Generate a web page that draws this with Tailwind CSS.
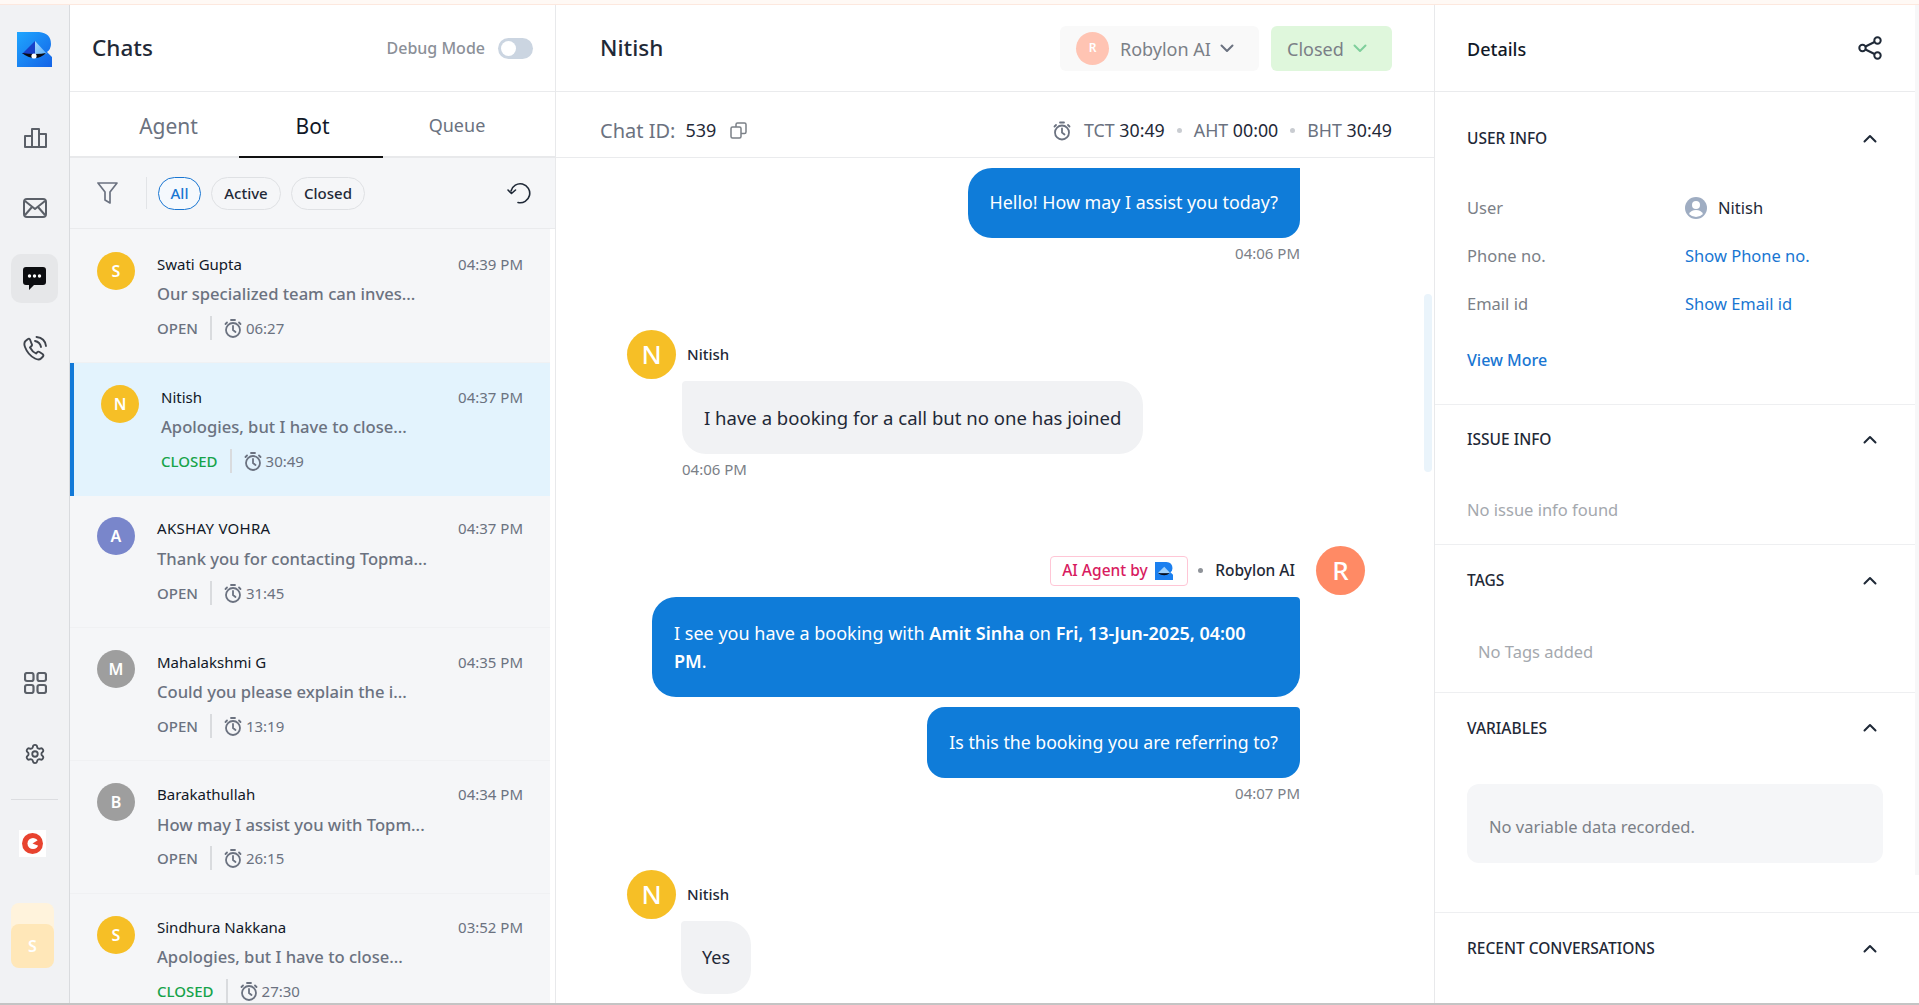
<!DOCTYPE html>
<html lang="en">
<head>
<meta charset="utf-8">
<title>Chats</title>
<script src="https://cdn.jsdelivr.net/npm/@tailwindcss/browser@4"></script>
</head>
<body class="h-[1005px] w-[1919px] overflow-hidden bg-white font-['Noto_Sans',sans-serif] text-[#111827]">
<div class="h-[5px] bg-[#fff9f5] border-b border-[#fde8de]"></div>
<div class="flex h-[998px] overflow-hidden">

  <!-- icon rail -->
  <aside class="w-[70px] shrink-0 bg-[#f1f2f4] border-r border-[#d9dbde] flex flex-col items-start">
    <svg class="ml-[17px] mt-[27px]" width="35" height="35" viewBox="0 0 35 35">
      <defs>
        <linearGradient id="lg" x1="0" y1="0" x2="1" y2="1"><stop offset="0" stop-color="#1fa6ff"/><stop offset="1" stop-color="#1463e6"/></linearGradient>
        <linearGradient id="lg2" x1="0" y1="0" x2="1" y2="1"><stop offset="0" stop-color="#a8d8ff"/><stop offset="1" stop-color="#5cb0fa"/></linearGradient>
      </defs>
      <path d="M0 0H22Q34 1 34 12Q34 17 30 20L35 25V35H0Z" fill="url(#lg)"/>
      <path d="M18 9L5 22H18Z" fill="#1740c8"/>
      <path d="M18 9L30 22H18Z" fill="url(#lg2)"/>
      <path d="M5 21Q11 22 18 22Q25 22 29 21Q24 26 18 26Q11 26 5 21Z" fill="#0b0b12"/>
      <circle cx="17" cy="24" r="2.6" fill="#fff"/>
    </svg>
    <svg class="ml-[24px] mt-[61px]" width="23" height="20" viewBox="0 0 23 20" fill="none" stroke="#5b6068" stroke-width="2" stroke-linejoin="round"><path d="M1 19V8H8V19ZM8 19V1H15V19ZM15 19V6H22V19Z"/></svg>
    <svg class="ml-[23px] mt-[50px]" width="24" height="20" viewBox="0 0 24 20" fill="none" stroke="#5b6068" stroke-width="2" stroke-linejoin="round"><rect x="1" y="1" width="22" height="18" rx="3"/><path d="M2 3L12 11L22 3M2 17L9 9M22 17L15 9"/></svg>
    <div class="ml-[11px] mt-[36px] w-[47px] h-[49px] rounded-[10px] bg-[#e6e7e9] flex items-center justify-center">
      <svg width="23" height="23" viewBox="0 0 23 23"><path d="M3 0H20Q23 0 23 3V15Q23 18 20 18H11L6 23V18H3Q0 18 0 15V3Q0 0 3 0Z" fill="#0c0d10"/><circle cx="6.5" cy="9" r="1.7" fill="#fff"/><circle cx="11.5" cy="9" r="1.7" fill="#fff"/><circle cx="16.5" cy="9" r="1.7" fill="#fff"/></svg>
    </div>
    <svg class="ml-[23px] mt-[33px]" width="24" height="25" viewBox="0 0 24 25" fill="none" stroke="#3f444c" stroke-width="1.9" stroke-linecap="round" stroke-linejoin="round"><path d="M5 3L2.500 5Q0.500 7 2 11Q5 19 12 22.500Q16 24.500 18 22.500L20 20.500Q21 19 19.500 18L16.500 16Q15 15 14 16.500L13 17.500Q9.500 16 7 11.500L8.500 10Q9.500 9 8.500 7.500L7 3.500Q6 2 5 3Z"/><path d="M12 5Q17 6 18 11M13.500 1Q22 2 23 10"/></svg>
    <svg class="ml-[24px] mt-[311px]" width="23" height="22" viewBox="0 0 23 22" fill="none" stroke="#5b6068" stroke-width="2.200"><rect x="1" y="1" width="8.500" height="8" rx="2"/><rect x="13.500" y="1" width="8.500" height="8" rx="2"/><rect x="1" y="13" width="8.500" height="8" rx="2"/><rect x="13.500" y="13" width="8.500" height="8" rx="2"/></svg>
    <svg class="ml-[24px] mt-[48px]" width="22" height="24" viewBox="0 0 24 24" fill="none" stroke="#4b5058" stroke-width="2" stroke-linecap="round" stroke-linejoin="round"><path d="M9.671 4.136a2.34 2.34 0 0 1 4.659 0 2.34 2.34 0 0 0 3.319 1.915 2.34 2.34 0 0 1 2.33 4.033 2.34 2.34 0 0 0 0 3.831 2.34 2.34 0 0 1-2.33 4.033 2.34 2.34 0 0 0-3.319 1.915 2.34 2.34 0 0 1-4.659 0 2.34 2.34 0 0 0-3.32-1.915 2.34 2.34 0 0 1-2.33-4.033 2.34 2.34 0 0 0 0-3.831A2.34 2.34 0 0 1 6.35 6.051a2.34 2.34 0 0 0 3.319-1.915"/><circle cx="12" cy="12" r="3"/></svg>
    <div class="ml-[11px] mt-[33px] w-[47px] h-px bg-[#dcdde0]"></div>
    <div class="ml-[19px] mt-[30px] w-[27px] h-[27px] bg-white flex items-center justify-center">
      <svg width="21" height="21" viewBox="0 0 21 21"><circle cx="10.500" cy="10.500" r="10.500" fill="#e8432f"/><circle cx="11" cy="10.500" r="5.500" fill="#fff"/><path d="M17 6.500L10.500 10.500L17 13Z" fill="#e8432f"/></svg>
    </div>
    <div class="ml-[11px] mt-[46px] w-[43px] h-[65px] relative">
      <div class="h-[40px] rounded-[8px] bg-[#fff3dc]"></div>
      <div class="absolute left-0 top-[21px] w-[43px] h-[44px] rounded-[8px] bg-[#ffe7b8] flex items-center justify-center text-white text-[16px] font-semibold">S</div>
    </div>
  </aside>

  <!-- chat list -->
  <section class="w-[486px] shrink-0 border-r border-[#e8e9eb] flex flex-col">
    <header class="h-[87px] shrink-0 border-b border-[#eaebed] flex items-center pl-[22px] pr-[22px]">
      <h1 class="text-[22.5px] font-medium text-[#1f2937] flex-1">Chats</h1>
      <span class="text-[16px] font-medium text-[#8b9098] mr-[13px]">Debug Mode</span>
      <span class="w-[35px] h-[21px] rounded-full bg-[#cbd5e1] relative">
        <span class="absolute left-[3px] top-[3px] w-[15px] h-[15px] rounded-full bg-white"></span>
      </span>
    </header>
    <div class="h-[66px] shrink-0 border-b-2 border-[#e8e9eb] flex text-[21px]">
      <div class="w-[169px] pt-[5px] flex items-center justify-center pl-[28px] text-[#6b7280]">Agent</div>
      <div class="w-[144px] -mb-[2px] pt-[5px] pl-[3px] border-b-2 border-[#111] flex items-center justify-center text-[#111827]">Bot</div>
      <div class="w-[143px] flex items-center justify-center text-[18px] pl-[5px] pt-[3px] text-[#6b7280]">Queue</div>
    </div>
    <div class="h-[71px] shrink-0 bg-[#f5f6f8] border-b border-[#eaebed] flex items-center pl-[27px] pr-[24px] text-[15px] font-medium">
      <svg width="21" height="22" viewBox="0 0 21 22" fill="none" stroke="#6b7280" stroke-width="1.700" stroke-linejoin="round"><path d="M1 1H20L13 10V21L8 18V10Z"/></svg>
      <span class="w-px h-[32px] bg-[#e2e4e7] ml-[28px] mr-[11px]"></span>
      <span class="h-[33px] w-[43px] rounded-full border border-[#1976d2] flex items-center justify-center text-[#1976d2] bg-[#f5f9fd]">All</span>
      <span class="h-[33px] w-[70px] ml-[10px] rounded-full border border-[#dfe1e4] flex items-center justify-center text-[#1f2937]">Active</span>
      <span class="h-[33px] w-[74px] ml-[10px] rounded-full border border-[#dfe1e4] flex items-center justify-center text-[#1f2937]">Closed</span>
      <svg class="ml-auto" width="24" height="22" viewBox="0 0 24 22" fill="none" stroke="#1f2937" stroke-width="1.600" stroke-linecap="round" stroke-linejoin="round"><path d="M4 9A9.500 9.500 0 1 1 11 20.500"/><path d="M1 8L4.500 11.500L8.500 8"/></svg>
    </div>

    <div class="flex-1 flex flex-col overflow-hidden w-[480px]">
      <div class="h-[134px] shrink-0 bg-[#f5f6f8] border-b border-[#f0f1f3] flex pl-[27px] pr-[27px]">
        <div class="w-[38px] h-[38px] mt-[23px] rounded-full bg-[#f6bf26] text-white font-semibold text-[16px] flex items-center justify-center shrink-0">S</div>
        <div class="ml-[22px] flex-1 pt-[25px]">
          <div class="flex justify-between h-[20px] items-center text-[15px]"><span class="text-[#111827]">Swati Gupta</span><span class="text-[#6b7280]">04:39 PM</span></div>
          <div class="mt-[8px] h-[24px] leading-[24px] text-[16.6px] font-medium text-[#6b7280]">Our specialized team can inves...</div>
          <div class="mt-[10px] h-[24px] flex items-center text-[15px] text-[#6b7280]"><span class="font-medium">OPEN</span><span class="w-[2px] h-[24px] bg-[#d9dbde] mx-[12px]"></span><svg class="shrink-0" width="18" height="19" viewBox="0 0 18 19" fill="none" stroke="#6b7280" stroke-width="1.800" stroke-linecap="round"><circle cx="9" cy="11" r="7"/><path d="M9 7V11L11.500 13M3 3.500L1.500 5M15 3.500L16.500 5M7 1H11"/></svg><span class="ml-[4px]">06:27</span></div>
        </div>
      </div>
      <div class="h-[133px] shrink-0 bg-[#e3f3fd] border-l-4 border-[#1279d8] flex pl-[27px] pr-[27px]">
        <div class="w-[38px] h-[38px] mt-[22px] rounded-full bg-[#f6bf26] text-white font-semibold text-[16px] flex items-center justify-center shrink-0">N</div>
        <div class="ml-[22px] flex-1 pt-[24px]">
          <div class="flex justify-between h-[20px] items-center text-[15px]"><span class="text-[#111827]">Nitish</span><span class="text-[#6b7280]">04:37 PM</span></div>
          <div class="mt-[8px] h-[24px] leading-[24px] text-[16.6px] font-medium text-[#6b7280]">Apologies, but I have to close...</div>
          <div class="mt-[10px] h-[24px] flex items-center text-[15px] text-[#6b7280]"><span class="font-medium text-[#16a34a]">CLOSED</span><span class="w-[2px] h-[24px] bg-[#d9dbde] mx-[12px]"></span><svg class="shrink-0" width="18" height="19" viewBox="0 0 18 19" fill="none" stroke="#6b7280" stroke-width="1.800" stroke-linecap="round"><circle cx="9" cy="11" r="7"/><path d="M9 7V11L11.500 13M3 3.500L1.500 5M15 3.500L16.500 5M7 1H11"/></svg><span class="ml-[4px]">30:49</span></div>
        </div>
      </div>
      <div class="h-[132px] shrink-0 bg-[#f5f6f8] border-b border-[#f0f1f3] flex pl-[27px] pr-[27px]">
        <div class="w-[38px] h-[38px] mt-[21px] rounded-full bg-[#7986cb] text-white font-semibold text-[16px] flex items-center justify-center shrink-0">A</div>
        <div class="ml-[22px] flex-1 pt-[22px]">
          <div class="flex justify-between h-[20px] items-center text-[15px]"><span class="text-[#111827] tracking-[0.3px]">AKSHAY VOHRA</span><span class="text-[#6b7280]">04:37 PM</span></div>
          <div class="mt-[9px] h-[24px] leading-[24px] text-[16.6px] font-medium text-[#6b7280]">Thank you for contacting Topma...</div>
          <div class="mt-[10px] h-[24px] flex items-center text-[15px] text-[#6b7280]"><span class="font-medium">OPEN</span><span class="w-[2px] h-[24px] bg-[#d9dbde] mx-[12px]"></span><svg class="shrink-0" width="18" height="19" viewBox="0 0 18 19" fill="none" stroke="#6b7280" stroke-width="1.800" stroke-linecap="round"><circle cx="9" cy="11" r="7"/><path d="M9 7V11L11.500 13M3 3.500L1.500 5M15 3.500L16.500 5M7 1H11"/></svg><span class="ml-[4px]">31:45</span></div>
        </div>
      </div>
      <div class="h-[133px] shrink-0 bg-[#f5f6f8] border-b border-[#f0f1f3] flex pl-[27px] pr-[27px]">
        <div class="w-[38px] h-[38px] mt-[22px] rounded-full bg-[#9e9e9e] text-white font-semibold text-[16px] flex items-center justify-center shrink-0">M</div>
        <div class="ml-[22px] flex-1 pt-[24px]">
          <div class="flex justify-between h-[20px] items-center text-[15px]"><span class="text-[#111827]">Mahalakshmi G</span><span class="text-[#6b7280]">04:35 PM</span></div>
          <div class="mt-[8px] h-[24px] leading-[24px] text-[16.6px] font-medium text-[#6b7280]">Could you please explain the i...</div>
          <div class="mt-[10px] h-[24px] flex items-center text-[15px] text-[#6b7280]"><span class="font-medium">OPEN</span><span class="w-[2px] h-[24px] bg-[#d9dbde] mx-[12px]"></span><svg class="shrink-0" width="18" height="19" viewBox="0 0 18 19" fill="none" stroke="#6b7280" stroke-width="1.800" stroke-linecap="round"><circle cx="9" cy="11" r="7"/><path d="M9 7V11L11.500 13M3 3.500L1.500 5M15 3.500L16.500 5M7 1H11"/></svg><span class="ml-[4px]">13:19</span></div>
        </div>
      </div>
      <div class="h-[133px] shrink-0 bg-[#f5f6f8] border-b border-[#f0f1f3] flex pl-[27px] pr-[27px]">
        <div class="w-[38px] h-[38px] mt-[22px] rounded-full bg-[#9e9e9e] text-white font-semibold text-[16px] flex items-center justify-center shrink-0">B</div>
        <div class="ml-[22px] flex-1 pt-[23px]">
          <div class="flex justify-between h-[20px] items-center text-[15px]"><span class="text-[#111827]">Barakathullah</span><span class="text-[#6b7280]">04:34 PM</span></div>
          <div class="mt-[9px] h-[24px] leading-[24px] text-[16.6px] font-medium text-[#6b7280]">How may I assist you with Topm...</div>
          <div class="mt-[9px] h-[24px] flex items-center text-[15px] text-[#6b7280]"><span class="font-medium">OPEN</span><span class="w-[2px] h-[24px] bg-[#d9dbde] mx-[12px]"></span><svg class="shrink-0" width="18" height="19" viewBox="0 0 18 19" fill="none" stroke="#6b7280" stroke-width="1.800" stroke-linecap="round"><circle cx="9" cy="11" r="7"/><path d="M9 7V11L11.500 13M3 3.500L1.500 5M15 3.500L16.500 5M7 1H11"/></svg><span class="ml-[4px]">26:15</span></div>
        </div>
      </div>
      <div class="flex-1 bg-[#f5f6f8] flex pl-[27px] pr-[27px]">
        <div class="w-[38px] h-[38px] mt-[22px] rounded-full bg-[#f6bf26] text-white font-semibold text-[16px] flex items-center justify-center shrink-0">S</div>
        <div class="ml-[22px] flex-1 pt-[23px]">
          <div class="flex justify-between h-[20px] items-center text-[15px]"><span class="text-[#111827]">Sindhura Nakkana</span><span class="text-[#6b7280]">03:52 PM</span></div>
          <div class="mt-[8px] h-[24px] leading-[24px] text-[16.6px] font-medium text-[#6b7280]">Apologies, but I have to close...</div>
          <div class="mt-[10px] h-[24px] flex items-center text-[15px] text-[#6b7280]"><span class="font-medium text-[#16a34a]">CLOSED</span><span class="w-[2px] h-[24px] bg-[#d9dbde] mx-[12px]"></span><svg class="shrink-0" width="18" height="19" viewBox="0 0 18 19" fill="none" stroke="#6b7280" stroke-width="1.800" stroke-linecap="round"><circle cx="9" cy="11" r="7"/><path d="M9 7V11L11.500 13M3 3.500L1.500 5M15 3.500L16.500 5M7 1H11"/></svg><span class="ml-[4px]">27:30</span></div>
        </div>
      </div>
    </div>
  </section>

  <!-- conversation -->
  <main class="w-[879px] shrink-0 border-r border-[#e8e9eb] flex flex-col relative">
    <header class="h-[87px] shrink-0 border-b border-[#eaebed] flex items-center pl-[44px] pr-[42px]">
      <h2 class="text-[22.5px] font-medium text-[#1f2937] flex-1">Nitish</h2>
      <div class="w-[199px] h-[45px] rounded-[6px] bg-[#f9f9f9] flex items-center pl-[16px] text-[18px] text-[#7b8087]">
        <span class="w-[33px] h-[33px] rounded-full bg-[#ffc4b3] text-white text-[12px] font-semibold flex items-center justify-center">R</span>
        <span class="ml-[11px] pt-[2px]">Robylon AI</span>
        <svg class="ml-[9px]" width="14" height="9" viewBox="0 0 14 9" fill="none" stroke="#6b7280" stroke-width="2" stroke-linecap="round" stroke-linejoin="round"><path d="M1.500 1.500L7 7L12.500 1.500"/></svg>
      </div>
      <div class="ml-[12px] w-[121px] h-[45px] rounded-[6px] bg-[#dff7dc] flex items-center pl-[16px] text-[18px] text-[#7b8087]">
        <span class="pt-[2px]">Closed</span>
        <svg class="ml-[9px]" width="14" height="9" viewBox="0 0 14 9" fill="none" stroke="#7fcf9b" stroke-width="2" stroke-linecap="round" stroke-linejoin="round"><path d="M1.500 1.500L7 7L12.500 1.500"/></svg>
      </div>
    </header>
    <div class="h-[66px] shrink-0 border-b border-[#eaebed] flex items-center pt-[12px] pl-[44px] pr-[42px] text-[#6b7280]">
      <span class="text-[20px]">Chat ID:</span>
      <span class="ml-[10px] text-[18px] text-[#1f2937]">539</span>
      <svg class="ml-[14px]" width="17" height="17" viewBox="0 0 17 17" fill="none" stroke="#7b8087" stroke-width="1.500"><rect x="1" y="5" width="10" height="11" rx="1.500"/><path d="M6 5V2.500Q6 1 7.500 1H14.500Q16 1 16 2.500V10Q16 11.500 14.500 11.500H11"/></svg>
      <svg class="ml-auto" width="18" height="20" viewBox="0 0 18 19" fill="none" stroke="#6b7280" stroke-width="1.800" stroke-linecap="round"><circle cx="9" cy="11" r="7"/><path d="M9 7V11L11.500 13M3 3.500L1.500 5M15 3.500L16.500 5M7 1H11"/></svg>
      <span class="ml-[13px] text-[17.8px]">TCT <span class="text-[#1f2937]">30:49</span></span>
      <span class="mx-[12px] w-[5px] h-[5px] rounded-full bg-[#c9ccd1]"></span>
      <span class="text-[17.8px]">AHT <span class="text-[#1f2937]">00:00</span></span>
      <span class="mx-[12px] w-[5px] h-[5px] rounded-full bg-[#c9ccd1]"></span>
      <span class="text-[17.8px]">BHT <span class="text-[#1f2937]">30:49</span></span>
    </div>

    <div class="flex-1 overflow-hidden relative text-[18px]">
      <div class="absolute left-[868px] top-[136px] w-[8px] h-[178px] rounded-full bg-[#eaf4fb]"></div>
      <div class="pt-[10px] pl-[71px] w-[744px] flex flex-col">
        <div class="self-end h-[70px] rounded-l-[24px] rounded-br-[18px] bg-[#0f7cd9] text-white text-[17.85px] flex items-center pb-[2px] px-[22px]">Hello! How may I assist you today?</div>
        <div class="self-end mt-[5px] h-[20px] leading-[20px] text-[15px] text-[#7b8087]">04:06 PM</div>

        <div class="mt-[67px] flex items-center h-[49px]">
          <span class="w-[49px] h-[49px] rounded-full bg-[#f6bf26] text-white text-[26px] font-medium flex items-center justify-center">N</span>
          <span class="ml-[11px] text-[15px] font-medium text-[#1f2937]">Nitish</span>
        </div>
        <div class="ml-[55px] mt-[2px] self-start h-[73px] rounded-[24px] bg-[#f1f2f4] text-[#1f2937] text-[18.55px] flex items-center px-[22px] rounded-tl-[4px]">I have a booking for a call but no one has joined</div>
        <div class="ml-[55px] mt-[5px] h-[20px] leading-[20px] text-[15px] text-[#7b8087]">04:06 PM</div>

        <div class="mt-[67px] -mr-[65px] flex items-center justify-end h-[49px]">
          <span class="h-[30px] w-[138px] rounded-[4px] border border-[#ffc6d6] flex items-center pl-[11px] text-[15.5px] font-medium text-[#d81b60]">AI Agent by
            <svg class="ml-[7px]" width="18" height="18" viewBox="0 0 35 35"><path d="M0 0H22Q34 1 34 12Q34 17 30 20L35 25V35H0Z" fill="#1b7fef"/><path d="M18 9L5 22H30Z" fill="#9fd0fb"/><path d="M5 21Q11 22 18 22Q25 22 29 21Q24 26 18 26Q11 26 5 21Z" fill="#0b0b12"/></svg>
          </span>
          <span class="ml-[10px] w-[5px] h-[5px] rounded-full bg-[#8f9399]"></span>
          <span class="ml-[12px] text-[15.5px] font-medium text-[#1f2937]">Robylon AI</span>
          <span class="ml-[21px] w-[49px] h-[49px] rounded-full bg-[#ff8a65] text-white text-[26px] font-medium flex items-center justify-center">R</span>
        </div>
        <div class="self-end mt-[2px] w-[648px] h-[100px] rounded-[24px] rounded-tr-[4px] bg-[#0f7cd9] text-white px-[22px] pt-[22px] leading-[28px]">I see you have a booking with <b class="font-semibold">Amit Sinha</b> on <b class="font-semibold">Fri, 13-Jun-2025, 04:00 PM</b>.</div>
        <div class="self-end mt-[10px] h-[71px] rounded-[18px] rounded-tr-[4px] bg-[#0f7cd9] text-white text-[17.7px] flex items-center px-[22px]">Is this the booking you are referring to?</div>
        <div class="self-end mt-[5px] h-[20px] leading-[20px] text-[15px] text-[#7b8087]">04:07 PM</div>

        <div class="mt-[67px] flex items-center h-[49px]">
          <span class="w-[49px] h-[49px] rounded-full bg-[#f6bf26] text-white text-[26px] font-medium flex items-center justify-center">N</span>
          <span class="ml-[11px] text-[15px] font-medium text-[#1f2937]">Nitish</span>
        </div>
        <div class="ml-[54px] mt-[2px] self-start h-[73px] rounded-[24px] rounded-tl-[4px] bg-[#f1f2f4] text-[#1f2937] flex items-center px-[21px]">Yes</div>
      </div>
    </div>
  </main>

  <!-- details -->
  <aside class="flex-1 flex flex-col relative">
    <div class="absolute right-0 top-0 w-[4px] h-[870px] bg-[#f7f7f8]"></div>
    <header class="h-[87px] shrink-0 border-b border-[#eaebed] flex items-center justify-between pl-[32px] pr-[37px] text-[18px] font-medium text-[#111827]">
      <span class="pt-[2px]">Details</span>
      <svg width="24" height="24" viewBox="0 0 24 24" fill="none" stroke="#1f2937" stroke-width="2"><circle cx="19.500" cy="4.500" r="3.200"/><circle cx="4.500" cy="12" r="3.200"/><circle cx="19.500" cy="19.500" r="3.200"/><path d="M7.500 10.500L16.500 6M7.500 13.500L16.500 18"/></svg>
    </header>

    <section class="h-[313px] shrink-0 border-b border-[#eeeff1] pl-[32px] pr-[42px]">
      <div class="h-[20px] mt-[36px] flex items-center justify-between text-[15.5px] font-medium text-[#1f2937]"><span class="pt-[2px]">USER INFO</span><svg width="14" height="9" viewBox="0 0 14 9" fill="none" stroke="#1f2937" stroke-width="2" stroke-linecap="round" stroke-linejoin="round"><path d="M1.500 7.500L7 2L12.500 7.500"/></svg></div>
      <div class="mt-[48px] h-[24px] flex items-center text-[16.5px]"><span class="w-[218px] text-[#7b8087]">User</span><svg width="22" height="22" viewBox="0 0 22 22"><circle cx="11" cy="11" r="11" fill="#9fadc2"/><circle cx="11" cy="8" r="4" fill="#fff"/><path d="M4 17Q6 13 11 13Q16 13 18 17Q15 20 11 20Q7 20 4 17Z" fill="#fff"/></svg><span class="ml-[11px] text-[#1f2937]">Nitish</span></div>
      <div class="mt-[24px] h-[24px] flex items-center text-[16.5px]"><span class="w-[218px] text-[#7b8087]">Phone no.</span><span class="text-[#1976d2]">Show Phone no.</span></div>
      <div class="mt-[24px] h-[24px] flex items-center text-[16.5px]"><span class="w-[218px] text-[#7b8087]">Email id</span><span class="text-[#1976d2]">Show Email id</span></div>
      <div class="mt-[33px] h-[22px] flex items-center text-[16px] font-medium text-[#1976d2]">View More</div>
    </section>

    <section class="h-[140px] shrink-0 border-b border-[#eeeff1] pl-[32px] pr-[42px]">
      <div class="h-[20px] mt-[24px] flex items-center justify-between text-[15.5px] font-medium text-[#1f2937]"><span class="pt-[2px]">ISSUE INFO</span><svg width="14" height="9" viewBox="0 0 14 9" fill="none" stroke="#1f2937" stroke-width="2" stroke-linecap="round" stroke-linejoin="round"><path d="M1.500 7.500L7 2L12.500 7.500"/></svg></div>
      <div class="mt-[49px] h-[24px] flex items-center text-[16.5px] text-[#a4a8ae]">No issue info found</div>
    </section>

    <section class="h-[148px] shrink-0 border-b border-[#eeeff1] pl-[32px] pr-[42px]">
      <div class="h-[20px] mt-[25px] flex items-center justify-between text-[15.5px] font-medium text-[#1f2937]"><span class="pt-[2px]">TAGS</span><svg width="14" height="9" viewBox="0 0 14 9" fill="none" stroke="#1f2937" stroke-width="2" stroke-linecap="round" stroke-linejoin="round"><path d="M1.500 7.500L7 2L12.500 7.500"/></svg></div>
      <div class="mt-[50px] h-[24px] flex items-center pl-[11px] text-[16.5px] text-[#a4a8ae]">No Tags added</div>
    </section>

    <section class="h-[220px] shrink-0 border-b border-[#eeeff1] pl-[32px] pr-[36px]">
      <div class="h-[20px] mt-[25px] pr-[6px] flex items-center justify-between text-[15.5px] font-medium text-[#1f2937]"><span class="pt-[2px]">VARIABLES</span><svg class="-mt-[2px]" width="14" height="9" viewBox="0 0 14 9" fill="none" stroke="#1f2937" stroke-width="2" stroke-linecap="round" stroke-linejoin="round"><path d="M1.500 7.500L7 2L12.500 7.500"/></svg></div>
      <div class="mt-[46px] h-[79px] rounded-[12px] bg-[#f5f6f8] flex items-center pt-[8px] pl-[22px] text-[16.5px] text-[#7b8087]">No variable data recorded.</div>
    </section>

    <section class="pl-[32px] pr-[42px]">
      <div class="h-[20px] mt-[25px] flex items-center justify-between text-[15.5px] font-medium text-[#1f2937]"><span class="pt-[2px]">RECENT CONVERSATIONS</span><svg width="14" height="9" viewBox="0 0 14 9" fill="none" stroke="#1f2937" stroke-width="2" stroke-linecap="round" stroke-linejoin="round"><path d="M1.500 7.500L7 2L12.500 7.500"/></svg></div>
    </section>
  </aside>
</div>
<div class="h-[2px] bg-[#c4c4c4]"></div>
</body>
</html>
